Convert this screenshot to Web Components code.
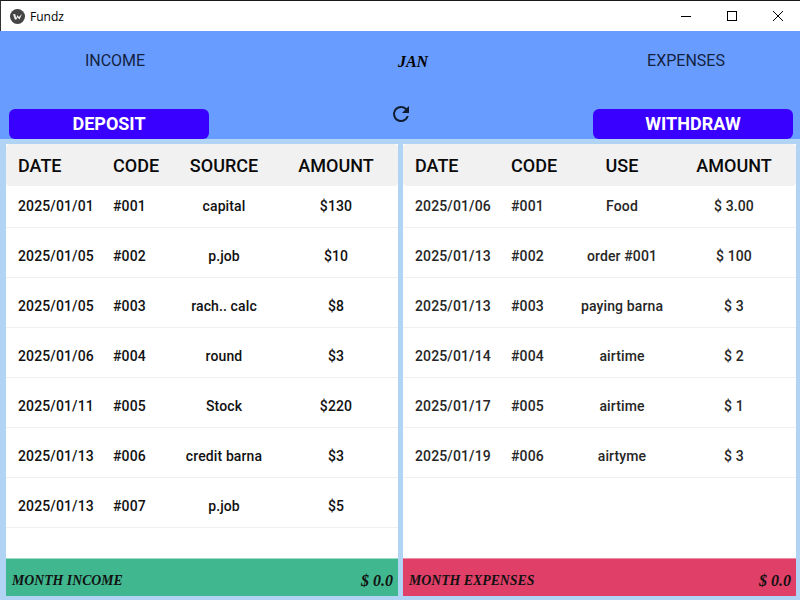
<!DOCTYPE html>
<html><head><meta charset="utf-8"><style>
html,body{margin:0;padding:0;width:800px;height:600px;overflow:hidden;background:#b1d4f5}
</style></head><body>
<fundz-app></fundz-app>
<script>
const def=(n,html)=>customElements.define(n,class extends HTMLElement{connectedCallback(){if(this.shadowRoot)return;this.attachShadow({mode:'open'}).innerHTML=html(this);}});
def('title-bar',()=>`<style>
:host{display:flex;align-items:center;height:30px;background:#fff;border-top:1px solid #1a1a1a;border-left:1px solid #333;font:12px "Open Sans","Noto Sans",sans-serif;color:#000;overflow:hidden}
.ic{width:15px;height:15px;margin-left:9px;margin-right:5px;display:block}
span{flex:1}
.b{width:46px;height:30px;display:flex;align-items:center;justify-content:center}
.e{margin-right:-1px}
</style>
<svg class="ic" viewBox="0 0 15 15"><circle cx="7.5" cy="7.5" r="7.5" fill="#444"/><path d="M3 5.2 L5.2 5 L6.2 9 L7.5 6 L8.8 8 L12 5 L9.5 10.5 L7.6 8.6 L6 11 L4.6 10 Z" fill="#eee"/></svg>
<span>Fundz</span>
<div class="b"><svg width="10" height="10" viewBox="0 0 10 10"><path d="M0 5.5H10" stroke="#000"/></svg></div>
<div class="b"><svg width="10" height="10" viewBox="0 0 10 10"><rect x=".5" y=".5" width="9" height="9" fill="none" stroke="#000"/></svg></div>
<div class="b e"><svg width="10" height="10" viewBox="0 0 10 10"><path d="M0 0L10 10M10 0L0 10" stroke="#000" stroke-width="1"/></svg></div>`);
def('top-head',()=>`<style>
:host{display:block;height:108px;background:#699cff;box-sizing:border-box}
.nav{display:grid;grid-template-columns:230px 366px 180px;height:58px;align-items:center;font:16px Roboto,sans-serif;color:#13233f;text-align:center}
.jan{font:italic bold 16px "Liberation Serif",serif;color:#000;padding-top:3px}
.acts{display:grid;grid-template-columns:200px 1fr 200px;padding:0 7px 0 9px;margin-top:20px;align-items:center}
.btn{height:30px;background:#3a00ff;border-radius:6px;color:#fff;font:700 18px/30px Roboto,sans-serif;text-align:center}
.r{display:flex;justify-content:center;height:30px;margin-top:-14px}
</style>
<div class="nav"><div>INCOME</div><div class="jan">JAN</div><div>EXPENSES</div></div>
<div class="acts"><div class="btn">DEPOSIT</div><div class="r"><svg width="24" height="24" viewBox="0 0 24 24"><path fill="#101c30" d="M17.65 6.35A7.96 7.96 0 0 0 12 4a8 8 0 1 0 7.73 10h-2.08A6 6 0 1 1 12 6c1.66 0 3.14.69 4.22 1.78L13 11h7V4l-2.35 2.35z"/></svg></div><div class="btn">WITHDRAW</div></div>`);
const cells=`::slotted(:nth-child(3)),::slotted(:nth-child(4)){text-align:center}`;
def('data-row',(h)=>`<style>
:host{display:grid;grid-template-columns:var(--cols);padding-left:12px;height:50px;box-sizing:border-box;border-bottom:1px solid #efefef;padding-top:6px;align-items:center;font:500 14px Roboto,sans-serif;letter-spacing:.12px;color:var(--ink,#111)}
:host([first]){height:42px;padding-top:0;padding-bottom:2px}
${cells}
</style><slot></slot>`);
def('data-head',(h)=>`<style>
:host{display:grid;grid-template-columns:var(--cols);padding-left:12px;height:42px;background:#f1f1f1;border-radius:4px;align-items:center;font:500 18px Roboto,sans-serif;color:#0a0a0a}
${cells}
</style><slot></slot>`);
def('total-bar',(h)=>`<style>
:host{display:flex;justify-content:space-between;align-items:center;height:38px;background:${h.getAttribute('color')};border-top:1px solid ${h.getAttribute('edge')};box-sizing:border-box;padding:6px 5px 0 6px;font:italic bold 13.8px "Liberation Serif",serif;color:#111;margin-top:auto}
</style><span>${h.getAttribute('label')}</span><span style="font-size:16px">$ 0.0</span>`);
const row=(r,first)=>`<data-row${first?' first':''}>${r.map(x=>`<div>${x}</div>`).join('')}</data-row>`;
def('data-panel',(h)=>{const d=JSON.parse(h.getAttribute('data')),hd=JSON.parse(h.getAttribute('head'));
return `<style>:host{display:flex;flex-direction:column;background:#fff;min-width:0;height:452px}</style>
<data-head>${hd.map(x=>`<div>${x}</div>`).join('')}</data-head>
${d.map((r,i)=>row(r,i==0)).join('')}
<total-bar label="${h.getAttribute('label')}" color="${h.getAttribute('color')}" edge="${h.getAttribute('edge')}"></total-bar>`});
const inc=[["2025/01/01","#001","capital","$130"],["2025/01/05","#002","p.job","$10"],["2025/01/05","#003","rach.. calc","$8"],["2025/01/06","#004","round","$3"],["2025/01/11","#005","Stock","$220"],["2025/01/13","#006","credit barna","$3"],["2025/01/13","#007","p.job","$5"]];
const exp=[["2025/01/06","#001","Food","$ 3.00"],["2025/01/13","#002","order #001","$ 100"],["2025/01/13","#003","paying barna","$ 3"],["2025/01/14","#004","airtime","$ 2"],["2025/01/17","#005","airtime","$ 1"],["2025/01/19","#006","airtyme","$ 3"]];
const esc=o=>JSON.stringify(o).replace(/"/g,'&quot;');
def('fundz-app',()=>`<style>
:host{display:block;width:800px;height:600px}
.main{display:grid;grid-template-columns:392px 393px;gap:5px;padding:5px 4px 4px 6px}
</style>
<title-bar></title-bar><top-head></top-head>
<div class="main">
<data-panel style="--cols:95px 60px 102px 122px" head="${esc(["DATE","CODE","SOURCE","AMOUNT"])}" data="${esc(inc)}" label="MONTH INCOME" color="#40b78f" edge="#9adcc4"></data-panel>
<data-panel style="--cols:96px 60px 102px 122px;--ink:#262626" head="${esc(["DATE","CODE","USE","AMOUNT"])}" data="${esc(exp)}" label="MONTH EXPENSES" color="#e03f68" edge="#ef8fa6"></data-panel>
</div>`);
</script></body></html>
